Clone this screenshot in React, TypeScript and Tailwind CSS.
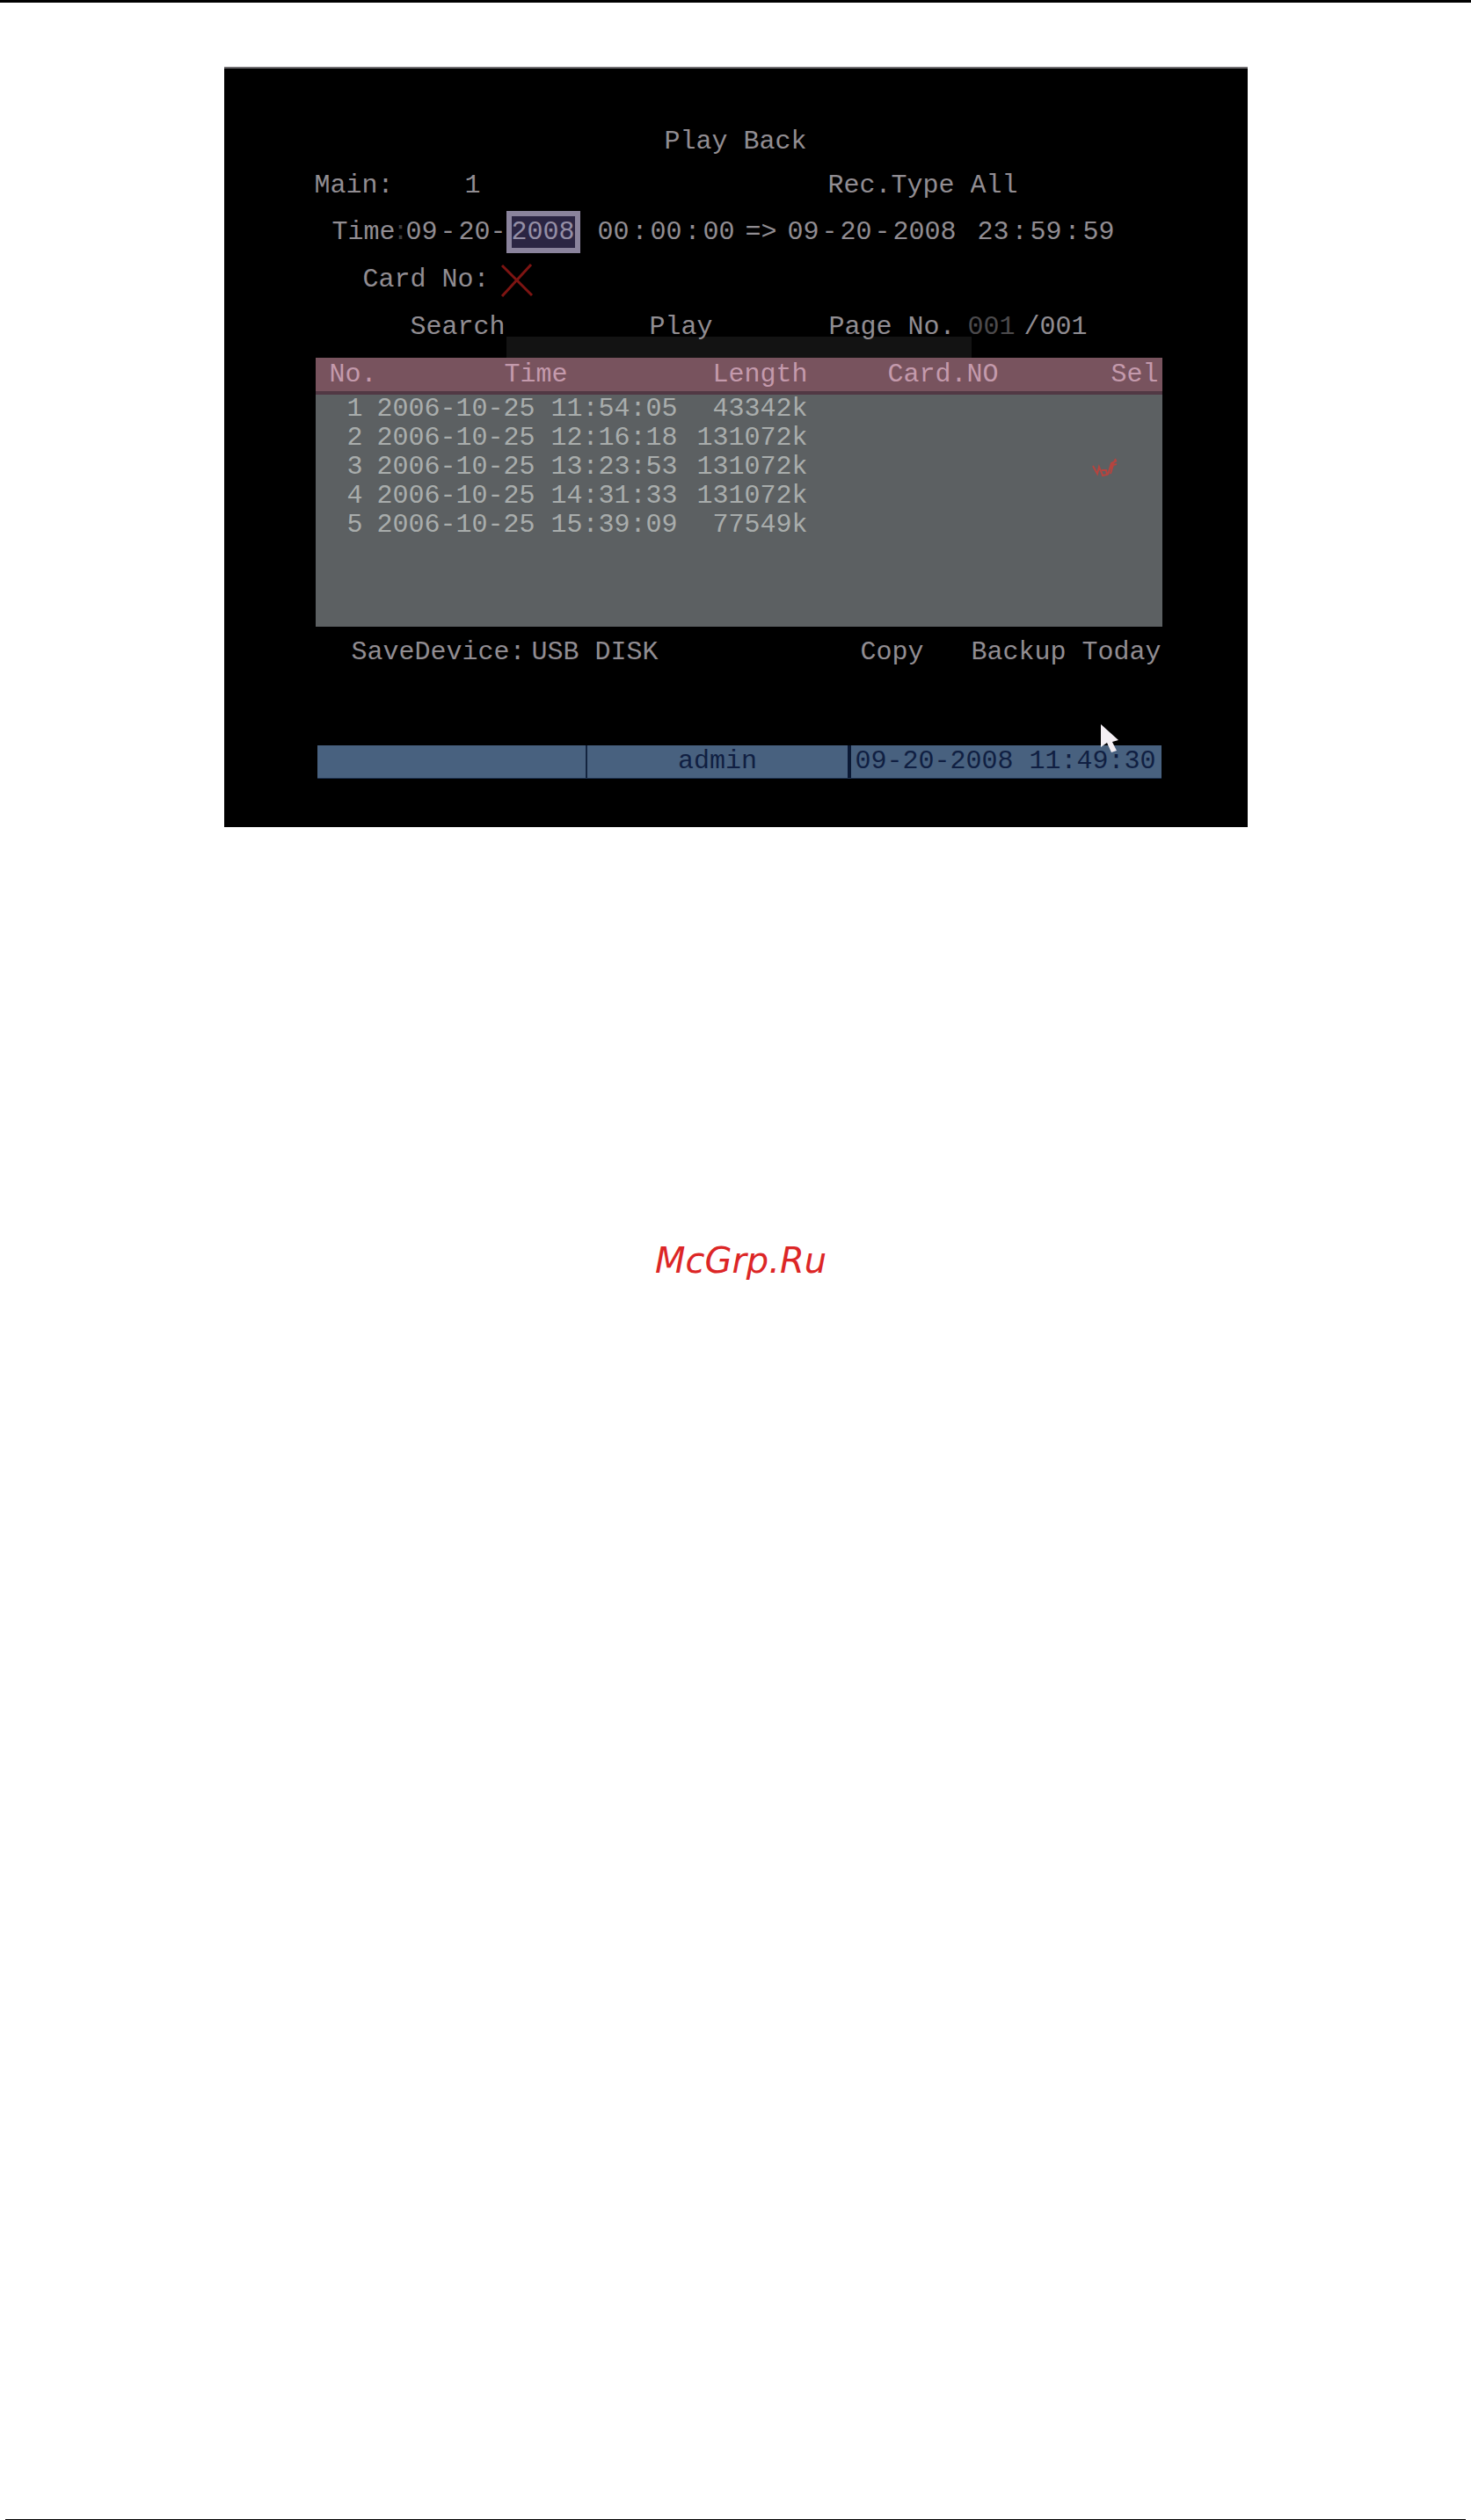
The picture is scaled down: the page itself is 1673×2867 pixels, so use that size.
import React, { useState } from "react";

type Recording = { no: number; time: string; length: string; selected?: boolean };

const recordings: Recording[] = [
  { no: 1, time: "2006-10-25 11:54:05", length: "43342k" },
  { no: 2, time: "2006-10-25 12:16:18", length: "131072k" },
  { no: 3, time: "2006-10-25 13:23:53", length: "131072k", selected: true },
  { no: 4, time: "2006-10-25 14:31:33", length: "131072k" },
  { no: 5, time: "2006-10-25 15:39:09", length: "77549k" },
];

function Digits({ label, value }: { label: string; value: string }) {
  return (
    <input
      aria-label={label}
      defaultValue={value}
      className={
        value.length > 2
          ? "w-[72px] bg-transparent p-0 outline-none"
          : "w-9 bg-transparent p-0 outline-none"
      }
    />
  );
}

function Sep({ children }: { children: string }) {
  return <span className="w-6 text-center">{children}</span>;
}

function SearchForm() {
  return (
    <form className="pl-[103px] pr-[97px]" onSubmit={(e) => e.preventDefault()}>
      <div className="flex h-[47px] items-start">
        <label htmlFor="main" className="w-[171px]">
          Main:
        </label>
        <select id="main" className="w-[413px] appearance-none bg-transparent" defaultValue="1">
          <option>1</option>
        </select>
        <label htmlFor="type" className="w-[162px]">
          Rec.Type
        </label>
        <select id="type" className="w-[72px] appearance-none bg-transparent" defaultValue="All">
          <option>All</option>
        </select>
      </div>

      <div className="flex h-12 items-center pl-5">
        <span>Time</span>
        <span className="flex w-3 justify-center text-[#3a3a3c]">:</span>
        <Digits label="From month" value="09" />
        <Sep>-</Sep>
        <Digits label="From day" value="20" />
        <span>-</span>
        <input
          aria-label="From year"
          defaultValue="2008"
          className="h-12 w-[84px] border-[6px] border-[#8a839c] bg-[#2b2543] p-0 text-[#958fa6] outline-none"
        />
        <span className="flex pl-5">
          <Digits label="From hour" value="00" />
          <Sep>:</Sep>
          <Digits label="From minute" value="00" />
          <Sep>:</Sep>
          <Digits label="From second" value="00" />
        </span>
        <span className="px-3">=&gt;</span>
        <Digits label="To month" value="09" />
        <Sep>-</Sep>
        <Digits label="To day" value="20" />
        <Sep>-</Sep>
        <Digits label="To year" value="2008" />
        <span className="flex pl-6">
          <Digits label="To hour" value="23" />
          <Sep>:</Sep>
          <Digits label="To minute" value="59" />
          <Sep>:</Sep>
          <Digits label="To second" value="59" />
        </span>
      </div>

      <div className="mt-3 flex h-[54px] items-start pl-[55px]">
        <span>Card No:</span>
        <button type="button" aria-label="Card number filter off" className="ml-3">
          <svg width="38" height="38" viewBox="0 0 38 38" fill="none" stroke="#7d1412" strokeWidth="3">
            <path d="M2 2 36 36M35 1 2 37" />
          </svg>
        </button>
      </div>

      <div className="flex items-start pl-[109px]">
        <button type="submit">Search</button>
        <button type="button" className="ml-[164px]">
          Play
        </button>
        <label htmlFor="page" className="ml-[132px]">
          Page No.
        </label>
        <input
          id="page"
          defaultValue="001"
          className="ml-[14px] w-16 bg-transparent p-0 text-[#4c4a4c] outline-none"
        />
        <span>/001</span>
      </div>
    </form>
  );
}

function RecordingTable() {
  const [selected, setSelected] = useState(recordings.map((r) => !!r.selected));
  return (
    <section className="relative ml-[104px] mr-[97px] mt-[17px] h-[306px] bg-[#5c6062]">
      <div className="absolute -top-6 left-[217px] -z-10 h-6 w-[529px] bg-[#131313]" />
      <table className="w-full table-fixed border-separate border-spacing-0">
        <colgroup>
          <col className="w-[70px]" />
          <col className="w-[362px]" />
          <col className="w-[128px]" />
          <col className="w-[308px]" />
          <col />
        </colgroup>
        <thead>
          <tr className="h-[42px] bg-[#78535e] text-[#c49aac] *:border-b-4 *:border-[#513844]">
            <th className="p-0 pl-4 text-left font-normal">No.</th>
            <th className="p-0 text-center font-normal">Time</th>
            <th className="p-0 text-right font-normal">Length</th>
            <th className="p-0 text-center font-normal">Card.NO</th>
            <th className="p-0 pr-1 text-right font-normal">Sel</th>
          </tr>
        </thead>
        <tbody className="leading-[33px] text-[#a9adac]">
          {recordings.map((r, i) => (
            <tr key={r.no} className="h-[33px]">
              <td className="p-0 pr-4 text-right">{r.no}</td>
              <td className="p-0">{r.time}</td>
              <td className="p-0 text-right">{r.length}</td>
              <td className="p-0" />
              <td className="p-0 pl-[15px]">
                <label className="relative flex h-[33px] items-center">
                  <input
                    type="checkbox"
                    aria-label={`Select recording ${r.no}`}
                    checked={selected[i]}
                    onChange={() => setSelected(selected.map((s, j) => (j === i ? !s : s)))}
                    className="peer sr-only"
                  />
                  <svg
                    width="30"
                    height="22"
                    viewBox="0 0 30 22"
                    fill="none"
                    stroke="#b5443f"
                    strokeWidth="2"
                    className="invisible peer-checked:visible"
                  >
                    <path d="M1 9 6 18 8 10 11 17 12 20 17 19 16 14 11 14M18 19 22 6 28 3M21 18 24 8 28 7M21 12 27 1" />
                  </svg>
                </label>
              </td>
            </tr>
          ))}
        </tbody>
      </table>
    </section>
  );
}

function PlaybackScreen() {
  return (
    <main className="isolate mx-auto mt-[73px] w-full max-w-[1164px] border-t-2 border-[#6f6d70] bg-black pb-[55px] pt-[65px] font-['Liberation_Mono',monospace] text-[30px] leading-9 text-[#918d92]">
      <h1 className="mb-[14px] text-center">Play Back</h1>
      <SearchForm />
      <RecordingTable />

      <div className="ml-[145px] mr-[98px] mt-[11px] flex">
        <label htmlFor="device" className="w-[205px]">
          SaveDevice:
        </label>
        <select id="device" className="w-[160px] appearance-none bg-transparent" defaultValue="USB DISK">
          <option>USB DISK</option>
        </select>
        <button type="button" className="ml-auto">
          Copy
        </button>
        <button type="button" className="ml-[54px]">
          Backup Today
        </button>
      </div>

      <footer className="relative ml-[106px] mr-[98px] mt-[88px] flex h-[38px] border-b border-[#1c3150] bg-[#48617f] text-[#101f42]">
        <span className="w-[307px] border-r-2 border-[#13243f]" />
        <span className="flex-1 text-center">admin</span>
        <span className="border-l-4 border-[#0a1834] pl-1 pr-[6px]">09-20-2008 11:49:30</span>
        <svg className="absolute -top-6 right-[48px]" width="22" height="32" viewBox="0 0 22 32" fill="#f4eff4">
          <path d="M1 0 21 18 14 20 19 30 13 32 8 21 1 26Z" />
        </svg>
      </footer>
    </main>
  );
}

export default function App() {
  return (
    <div className="flex min-h-screen flex-col border-t-[3px] border-black bg-white">
      <PlaybackScreen />
      <p className="mt-[469px] pl-3 text-center font-['DejaVu_Sans',sans-serif] text-[40px] italic leading-[48px] text-[#dc2626]">
        McGrp.Ru
      </p>
      <hr className="mx-[6px] mt-auto border-t border-black" />
    </div>
  );
}
